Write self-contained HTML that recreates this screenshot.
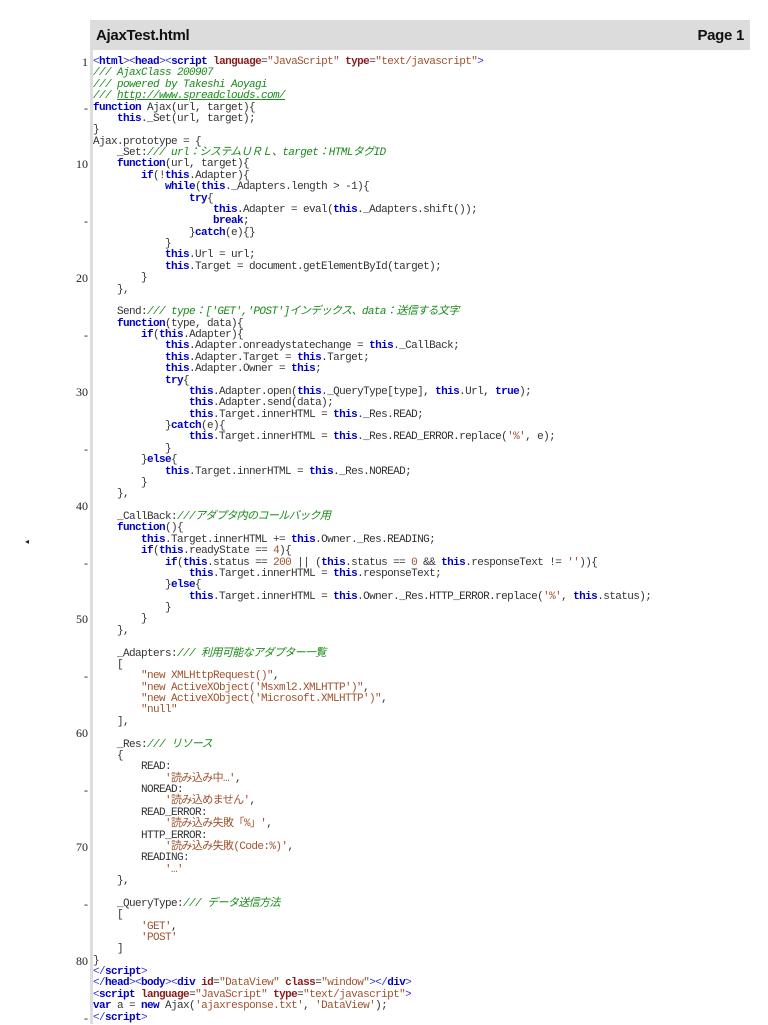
<!DOCTYPE html>
<html><head><meta charset="utf-8"><style>
body{margin:0;width:768px;height:1024px;background:#fff;position:relative;overflow:hidden}
.hdr{position:absolute;left:90px;top:20px;width:660px;height:30px;background:#dcdcdc;font:bold 15px "Liberation Sans",sans-serif;color:#111;letter-spacing:-0.3px}
.hdr .l{position:absolute;left:6px;top:7px}
.hdr .r{position:absolute;right:6px;top:7px}
.bar{position:absolute;left:90px;top:50px;width:3px;height:974px;background:#ddd}
.code{position:absolute;left:93px;top:57px;font:11px/11.38px "Liberation Mono","Noto Sans CJK JP",monospace;letter-spacing:-0.6px;white-space:pre;color:#333}
.nums{position:absolute;left:38px;width:50px;top:57px;font:12px/11.38px "Liberation Serif",serif;text-align:right;white-space:pre;color:#222}
.k{color:#0000c8;font-weight:bold}
.c{color:#1a8a1a;font-style:italic}
.s{color:#a0522d}
.a{color:#8b1a1a;font-weight:bold}
.t{color:#3333cc}
.u{text-decoration:underline}
.arr{position:absolute;left:25px;top:537px;font-size:8px;color:#222}
</style></head><body>
<div class="hdr"><span class="l">AjaxTest.html</span><span class="r">Page 1</span></div>
<div class="bar"></div>
<div class="arr">◂</div>
<div class="nums">1



-




10




-




20




-




30




-




40




-




50




-




60




-




70




-




80




-</div>
<div class="code"><span class="t">&lt;</span><span class="k">html</span><span class="t">&gt;&lt;</span><span class="k">head</span><span class="t">&gt;&lt;</span><span class="k">script</span> <span class="a">language</span>=<span class="s">"JavaScript"</span> <span class="a">type</span>=<span class="s">"text/javascript"</span><span class="t">&gt;</span>
<span class="c">/// AjaxClass 200907</span>
<span class="c">/// powered by Takeshi Aoyagi</span>
<span class="c">/// <span class="u">http://www.spreadclouds.com/</span></span>
<span class="k">function</span> Ajax(url, target){
    <span class="k">this</span>._Set(url, target);
}
Ajax.prototype = {
    _Set:<span class="c">/// url：システムＵＲＬ、target：HTMLタグID</span>
    <span class="k">function</span>(url, target){
        <span class="k">if</span>(!<span class="k">this</span>.Adapter){
            <span class="k">while</span>(<span class="k">this</span>._Adapters.length &gt; -1){
                <span class="k">try</span>{
                    <span class="k">this</span>.Adapter = eval(<span class="k">this</span>._Adapters.shift());
                    <span class="k">break</span>;
                }<span class="k">catch</span>(e){}
            }
            <span class="k">this</span>.Url = url;
            <span class="k">this</span>.Target = document.getElementById(target);
        }
    },

    Send:<span class="c">/// type：['GET','POST']インデックス、data：送信する文字</span>
    <span class="k">function</span>(type, data){
        <span class="k">if</span>(<span class="k">this</span>.Adapter){
            <span class="k">this</span>.Adapter.onreadystatechange = <span class="k">this</span>._CallBack;
            <span class="k">this</span>.Adapter.Target = <span class="k">this</span>.Target;
            <span class="k">this</span>.Adapter.Owner = <span class="k">this</span>;
            <span class="k">try</span>{
                <span class="k">this</span>.Adapter.open(<span class="k">this</span>._QueryType[type], <span class="k">this</span>.Url, <span class="k">true</span>);
                <span class="k">this</span>.Adapter.send(data);
                <span class="k">this</span>.Target.innerHTML = <span class="k">this</span>._Res.READ;
            }<span class="k">catch</span>(e){
                <span class="k">this</span>.Target.innerHTML = <span class="k">this</span>._Res.READ_ERROR.replace(<span class="s">'%'</span>, e);
            }
        }<span class="k">else</span>{
            <span class="k">this</span>.Target.innerHTML = <span class="k">this</span>._Res.NOREAD;
        }
    },

    _CallBack:<span class="c">///アダプタ内のコールバック用</span>
    <span class="k">function</span>(){
        <span class="k">this</span>.Target.innerHTML += <span class="k">this</span>.Owner._Res.READING;
        <span class="k">if</span>(<span class="k">this</span>.readyState == <span class="s">4</span>){
            <span class="k">if</span>(<span class="k">this</span>.status == <span class="s">200</span> || (<span class="k">this</span>.status == <span class="s">0</span> &amp;&amp; <span class="k">this</span>.responseText != <span class="s">''</span>)){
                <span class="k">this</span>.Target.innerHTML = <span class="k">this</span>.responseText;
            }<span class="k">else</span>{
                <span class="k">this</span>.Target.innerHTML = <span class="k">this</span>.Owner._Res.HTTP_ERROR.replace(<span class="s">'%'</span>, <span class="k">this</span>.status);
            }
        }
    },

    _Adapters:<span class="c">/// 利用可能なアダプター一覧</span>
    [
        <span class="s">"new XMLHttpRequest()"</span>,
        <span class="s">"new ActiveXObject('Msxml2.XMLHTTP')"</span>,
        <span class="s">"new ActiveXObject('Microsoft.XMLHTTP')"</span>,
        <span class="s">"null"</span>
    ],

    _Res:<span class="c">/// リソース</span>
    {
        READ:
            <span class="s">'読み込み中…'</span>,
        NOREAD:
            <span class="s">'読み込めません'</span>,
        READ_ERROR:
            <span class="s">'読み込み失敗「%」'</span>,
        HTTP_ERROR:
            <span class="s">'読み込み失敗(Code:%)'</span>,
        READING:
            <span class="s">'…'</span>
    },

    _QueryType:<span class="c">/// データ送信方法</span>
    [
        <span class="s">'GET'</span>,
        <span class="s">'POST'</span>
    ]
}
<span class="t">&lt;/</span><span class="k">script</span><span class="t">&gt;</span>
<span class="t">&lt;/</span><span class="k">head</span><span class="t">&gt;&lt;</span><span class="k">body</span><span class="t">&gt;&lt;</span><span class="k">div</span> <span class="a">id</span>=<span class="s">"DataView"</span> <span class="a">class</span>=<span class="s">"window"</span><span class="t">&gt;&lt;/</span><span class="k">div</span><span class="t">&gt;</span>
<span class="t">&lt;</span><span class="k">script</span> <span class="a">language</span>=<span class="s">"JavaScript"</span> <span class="a">type</span>=<span class="s">"text/javascript"</span><span class="t">&gt;</span>
<span class="k">var</span> a = <span class="k">new</span> Ajax(<span class="s">'ajaxresponse.txt'</span>, <span class="s">'DataView'</span>);
<span class="t">&lt;/</span><span class="k">script</span><span class="t">&gt;</span></div>
</body></html>
